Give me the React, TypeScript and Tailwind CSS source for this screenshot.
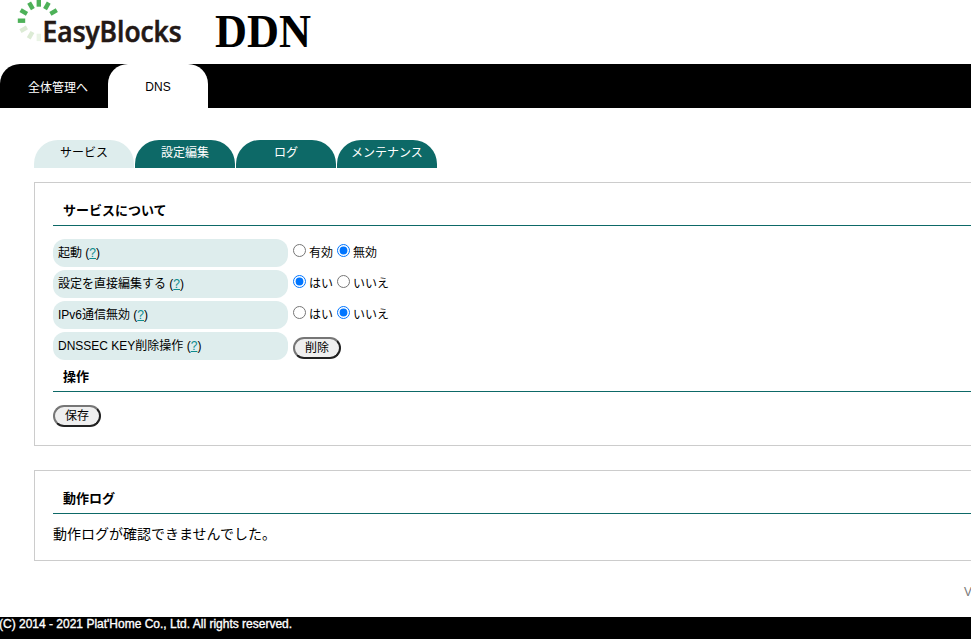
import React from "react";

const spokes: { x: number; y: number; a: number; c: string }[] = [
  { x: 53.6, y: 12, a: 60, c: "#4db158" },
  { x: 46.9, y: 5.9, a: 30, c: "#4db158" },
  { x: 38.8, y: 3, a: 0, c: "#4db158" },
  { x: 31, y: 5.9, a: -30, c: "#4db158" },
  { x: 23.8, y: 12, a: -60, c: "#4db158" },
  { x: 21.5, y: 20.7, a: 90, c: "#4db158" },
  { x: 23.7, y: 29.2, a: 60, c: "#dcebd5" },
  { x: 30.6, y: 35.2, a: 30, c: "#dcebd5" },
  { x: 38.8, y: 37.4, a: 0, c: "#eaf4e6" },
];

function Logo() {
  return (
    <svg width="190" height="54" viewBox="0 0 190 54" className="block shrink-0">
      {spokes.map((s) => (
        <rect
          key={`${s.x}-${s.y}`}
          x={s.x - 2.2}
          y={s.y - 3.7}
          width="4.4"
          height="7.4"
          fill={s.c}
          transform={`rotate(${s.a} ${s.x} ${s.y})`}
        />
      ))}
      <text
        x="42.6"
        y="41.6"
        textLength="139"
        lengthAdjust="spacingAndGlyphs"
        fill="#231815"
        stroke="#231815"
        strokeWidth="0.6"
        className="font-['Open_Sans','Noto_Sans',sans-serif] text-[28px] font-semibold"
      >
        EasyBlocks
      </text>
    </svg>
  );
}

function Tab({ label, active }: { label: string; active?: boolean }) {
  return (
    <a
      className={`block h-7 w-[100px] rounded-t-[24px] text-center leading-[26px] ${
        active ? "bg-[#deeded] text-black" : "bg-[#0d6967] text-white"
      }`}
    >
      {label}
    </a>
  );
}

function Heading({ children }: { children: React.ReactNode }) {
  return (
    <h2 className="h-[31px] border-b border-[#0d6967] pl-[10px] text-[13px] leading-[32px] font-bold">
      {children}
    </h2>
  );
}

function Button({ children }: { children: React.ReactNode }) {
  return (
    <button className="block h-[22px] w-12 rounded-[11px] border-2 border-t-[#767676] border-r-[#212121] border-b-[#212121] border-l-[#767676] bg-[#efefef] text-center leading-[18px]">
      {children}
    </button>
  );
}

function Row({ label, children }: { label: string; children: React.ReactNode }) {
  return (
    <div className="flex h-[31px]">
      <div className="h-7 w-[235px] rounded-[12px] bg-[#deeded] pl-[5px] leading-[29px]">
        {label} (<a className="text-[#0d8a8c] underline">?</a>)
      </div>
      <div className="pl-[5px]">{children}</div>
    </div>
  );
}

function Radios({ name, options, selected }: { name: string; options: string[]; selected: number }) {
  return (
    <div className="flex h-7">
      {options.map((o, i) => (
        <label key={o} className="flex w-11 whitespace-nowrap">
          <input type="radio" name={name} defaultChecked={i === selected} className="m-0 mt-[5px] h-[13px] w-[13px] shrink-0" />
          <span className="pl-[3px] leading-[29px]">{o}</span>
        </label>
      ))}
    </div>
  );
}

export default function App() {
  return (
    <div className="flex h-[639px] w-[971px] flex-col overflow-hidden bg-white font-['Liberation_Sans','Noto_Sans_CJK_JP',sans-serif] text-xs text-black">
      <header className="flex h-16 shrink-0">
        <Logo />
        <h1 className="ml-[25px]">
          <svg width="110" height="64" className="block">
            <text
              x="0"
              y="47"
              textLength="96"
              lengthAdjust="spacingAndGlyphs"
              className="font-['Liberation_Serif',serif] text-[47px] font-bold"
            >
              DDN
            </text>
          </svg>
        </h1>
      </header>
      <nav className="flex h-11 shrink-0 rounded-tl-[20px] bg-black">
        <a className="w-[108px] pl-2 text-center leading-[49px] text-white">全体管理へ</a>
        <a className="w-[100px] rounded-t-[20px] bg-white text-center leading-[46px]">DNS</a>
      </nav>
      <main className="flex shrink-0 flex-col pt-8 pl-[34px]">
        <div className="flex gap-px">
          <Tab label="サービス" active />
          <Tab label="設定編集" />
          <Tab label="ログ" />
          <Tab label="メンテナンス" />
        </div>
        <section className="mt-[14px] h-[264px] border border-r-0 border-[#cccccc] pt-3 pl-[18px]">
          <Heading>サービスについて</Heading>
          <div className="pt-[13px]">
            <Row label="起動">
              <Radios name="boot" options={["有効", "無効"]} selected={1} />
            </Row>
            <Row label="設定を直接編集する">
              <Radios name="edit" options={["はい", "いいえ"]} selected={0} />
            </Row>
            <Row label="IPv6通信無効">
              <Radios name="ipv6" options={["はい", "いいえ"]} selected={1} />
            </Row>
            <Row label="DNSSEC KEY削除操作">
              <div className="pt-[5px]">
                <Button>削除</Button>
              </div>
            </Row>
          </div>
          <div className="-mt-[2px]">
            <Heading>操作</Heading>
          </div>
          <div className="pt-[13px]">
            <Button>保存</Button>
          </div>
        </section>
        <section className="mt-6 h-[91px] border border-r-0 border-[#cccccc] pt-3 pl-[18px]">
          <Heading>動作ログ</Heading>
          <p className="pt-[5px] text-sm leading-[30px]">動作ログが確認できませんでした。</p>
        </section>
      </main>
      <div className="flex h-14 shrink-0 items-center pt-[6px] pl-[964px] text-[#777777]">V</div>
      <footer className="grow bg-black leading-[14px] text-white">
        <span className="-ml-px [-webkit-text-stroke:0.35px_white]">(C) 2014 - 2021 Plat'Home Co., Ltd. All rights reserved.</span>
      </footer>
    </div>
  );
}
